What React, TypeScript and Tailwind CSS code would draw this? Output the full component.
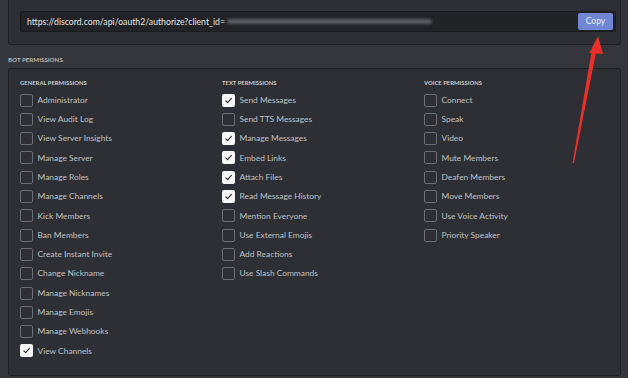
import React from 'react';

// Discord bot permission picker, old dark theme

type Perm = { label: string; checked?: boolean };

const general: Perm[] = [
    { label: 'Administrator' },
    { label: 'View Audit Log' },
    { label: 'View Server Insights' },
    { label: 'Manage Server' },
    { label: 'Manage Roles' },
    { label: 'Manage Channels' },
    { label: 'Kick Members' },
    { label: 'Ban Members' },
    { label: 'Create Instant Invite' },
    { label: 'Change Nickname' },
    { label: 'Manage Nicknames' },
    { label: 'Manage Emojis' },
    { label: 'Manage Webhooks' },
    { label: 'View Channels', checked: true },
];

const text: Perm[] = [
    { label: 'Send Messages', checked: true },
    { label: 'Send TTS Messages' },
    { label: 'Manage Messages', checked: true },
    { label: 'Embed Links', checked: true },
    { label: 'Attach Files', checked: true },
    { label: 'Read Message History', checked: true },
    { label: 'Mention Everyone' },
    { label: 'Use External Emojis' },
    { label: 'Add Reactions' },
    { label: 'Use Slash Commands' },
];

const voice: Perm[] = [
    { label: 'Connect' },
    { label: 'Speak' },
    { label: 'Video' },
    { label: 'Mute Members' },
    { label: 'Deafen Members' },
    { label: 'Move Members' },
    { label: 'Use Voice Activity' },
    { label: 'Priority Speaker' },
];

const Checkbox = ({ checked }: { checked?: boolean }) =>
    checked ? (
        <span className="w-[13px] h-[13px] rounded-[2px] bg-[#f6f6f7] flex items-center justify-center shrink-0">
            <svg width="9" height="9" viewBox="0 0 10 10" fill="none">
                <path d="M2 5.4 L4 7.4 L8.2 2.6" stroke="#2f3136" strokeWidth="1.3" strokeLinecap="round" strokeLinejoin="round" />
            </svg>
        </span>
    ) : (
        <span className="w-[13px] h-[13px] rounded-[2px] border border-[#6b6e74] shrink-0" />
    );

const Column = ({ title, items }: { title: string; items: Perm[] }) => (
    <div className="w-[202px] shrink-0 flex flex-col">
        <div className="h-[10px] flex items-center text-[5.9px] font-bold text-[#c8cacd] uppercase whitespace-nowrap">{title}</div>
        <div className="mt-[2.4px] flex flex-col">
            {items.map((p) => (
                <div key={p.label} className="h-[19.3px] flex items-center gap-[4.5px]">
                    <Checkbox checked={p.checked} />
                    <span className="text-[8.4px] text-[#bfc1c4] whitespace-nowrap">{p.label}</span>
                </div>
            ))}
        </div>
    </div>
);

export default function App() {
    return (
        <div className="relative w-[628px] h-[378px] overflow-hidden bg-[#34363b] pl-[8px] pr-[7px] font-['Lato','Open_Sans',sans-serif]">
            {/* url box */}
            <div className="h-[45px] bg-[#2d2f34] border-x border-b border-[#1f2024] rounded-b-[3px] pl-[11px] pr-[4px] pt-[11px]">
                <div className="h-[21px] bg-[#222327] border border-[#1a1b1e] rounded-[2px] flex items-center pl-[6px] pr-[2px]">
                    <span className="text-[8.7px] text-[#e2e3e4] whitespace-nowrap">https://discord.com/api/oauth2/authorize?client_id=</span>
                    <span className="ml-[2px] h-[5px] w-[205px] rounded-full bg-[#6a6c70] blur-[1.5px] opacity-80" />
                    <button className="ml-auto h-[17px] w-[35px] rounded-[2px] bg-[#7187d6] text-[8.5px] text-[#e8ebf8]">Copy</button>
                </div>
            </div>

            <div className="h-[23px] flex items-center pt-[6px] text-[6.2px] font-bold text-[#b3b5b8] uppercase">Bot Permissions</div>

            <div className="h-[308px] bg-[#2d2f34] border border-[#1f2024] rounded-[3px] pl-[11px] pt-[9px] flex">
                <Column title="General Permissions" items={general} />
                <Column title="Text Permissions" items={text} />
                <Column title="Voice Permissions" items={voice} />
            </div>

            {/* red annotation arrow */}
            <svg className="absolute left-0 top-0 pointer-events-none" width="628" height="378">
                <polygon points="572.5,163 574,163 596.5,50 592,49.5" fill="#ec2f2a" />
                <polygon points="598,36 589.5,53 603,54" fill="#ec2f2a" />
            </svg>
        </div>
    );
}
